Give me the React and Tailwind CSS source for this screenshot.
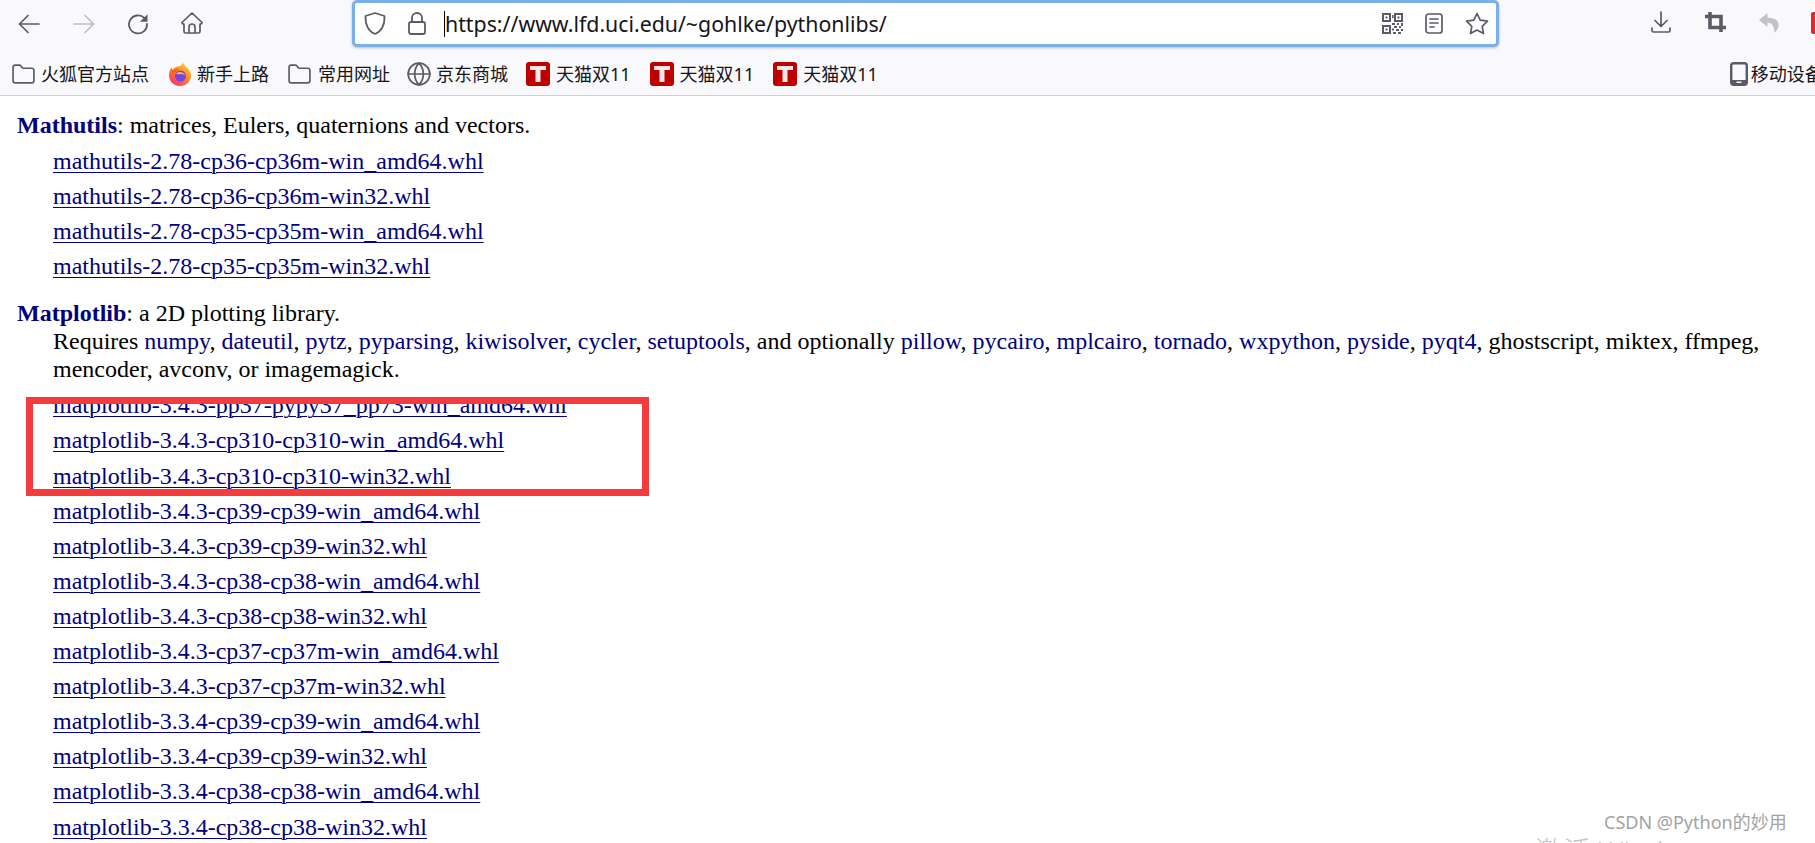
import { Folder, Globe } from 'lucide-react'

const ink = '#5b5b66'

const Back = ({ color = ink, flip = false }) => (
  <svg width="22" height="20" viewBox="0 0 22 20" fill="none" stroke={color} strokeWidth="1.7" strokeLinecap="round" strokeLinejoin="round" style={flip ? { transform: 'scaleX(-1)' } : undefined}>
    <path d="M1.5 10H21M10 1.5 1.5 10l8.5 8.5" />
  </svg>
)

const Reload = () => (
  <svg width="22" height="22" viewBox="0 0 22 22" fill="none">
    <path d="M17.5 5.2A9 9 0 1 0 20 11" stroke={ink} strokeWidth="1.8" strokeLinecap="round" />
    <path d="M20.5 1.2v7.6h-7.6z" fill={ink} />
  </svg>
)

const HomeIcon = () => (
  <svg width="22" height="22" viewBox="0 0 22 22" fill="none" stroke={ink} strokeWidth="1.7" strokeLinejoin="round">
    <path d="M11 1 1 10.5c0 1 .6 1.5 2 1.5v7.5c0 1 .6 1.5 1.5 1.5h13c1 0 1.500-.5 1.500-1.500V12c1.400 0 2-.5 2-1.500z" />
    <path d="M8 21v-6a3 3 0 0 1 6 0v6" />
  </svg>
)

const Shield = () => (
  <svg width="22" height="23" viewBox="0 0 22 23" fill="none" stroke={ink} strokeWidth="1.7" strokeLinejoin="round">
    <path d="M11 1 1.500 4c-.3 8 1.500 14.500 9.500 18 8-3.500 9.800-10 9.500-18z" />
  </svg>
)

const LockIcon = () => (
  <svg width="18" height="23" viewBox="0 0 18 23" fill="none" stroke={ink} strokeWidth="1.8">
    <rect x="1" y="10" width="16" height="12" rx="2" />
    <path d="M4 10V6a5 5 0 0 1 10 0v4" />
  </svg>
)

const QrIcon = () => (
  <svg width="21" height="21" viewBox="0 0 21 21" fill={ink}>
    <path fillRule="evenodd" d="M0 0h9v9H0zM2 2v5h5V2zM12 0h9v9h-9zM14 2v5h5V2zM0 12h9v9H0zM2 14v5h5v-5z" />
    <rect x="3.500" y="3.500" width="2" height="2" />
    <rect x="15.500" y="3.500" width="2" height="2" />
    <rect x="3.500" y="15.500" width="2" height="2" />
    <rect x="10" y="2" width="1.500" height="3" />
    <rect x="10" y="10" width="3" height="2" />
    <rect x="15" y="10" width="2" height="2" />
    <rect x="19" y="10" width="2" height="3" />
    <rect x="12" y="13" width="3" height="2" />
    <rect x="17" y="13" width="2" height="2" />
    <rect x="10" y="15.500" width="2" height="2" />
    <rect x="14" y="16" width="3" height="2" />
    <rect x="19" y="16" width="2" height="2" />
    <rect x="11" y="19" width="3" height="2" />
    <rect x="16" y="19" width="3" height="2" />
  </svg>
)

const Reader = () => (
  <svg width="18" height="21" viewBox="0 0 18 21" fill="none" stroke={ink} strokeWidth="1.700" strokeLinecap="round">
    <rect x="1" y="1" width="16" height="19" rx="2.500" />
    <path d="M5 6h8M5 10h8M5 14h4" />
  </svg>
)

const StarIcon = () => (
  <svg width="24" height="23" viewBox="0 0 24 23" fill="none" stroke={ink} strokeWidth="1.700" strokeLinejoin="round">
    <path d="m12 1.500 3.200 6.700 7.300 1-5.300 5.100 1.300 7.300-6.500-3.500-6.500 3.500 1.300-7.300L1.500 9.200l7.300-1z" />
  </svg>
)

const DownloadIcon = () => (
  <svg width="20" height="22" viewBox="0 0 20 22" fill="none" stroke={ink} strokeWidth="1.700" strokeLinecap="round" strokeLinejoin="round">
    <path d="M10 1v14M4 9.500l6 6 6-6M1 17v2.500c0 1 .6 1.500 1.500 1.500h15c1 0 1.500-.5 1.500-1.500V17" />
  </svg>
)

const CropIcon = () => (
  <svg width="21" height="20" viewBox="0 0 21 20" fill="none" stroke={ink} strokeWidth="3.600">
    <path d="M0 4.500h16V20M5 0v15.500h16" />
  </svg>
)

const UndoIcon = () => (
  <svg width="20" height="20" viewBox="0 0 20 20" fill="#c2c2c8">
    <path d="M8.500 0 0 7l8.500 7V9.800c4 0 6.500 2.500 7 10 3.500-3 4.500-6 4-9-.6-4-4.500-6-11-6z" />
  </svg>
)

const Firefox = () => (
  <svg width="22" height="24" viewBox="0 0 22 24">
    <defs>
      <linearGradient id="ff" x1="0.800" y1="0" x2="0.200" y2="1">
        <stop offset="0" stopColor="#ffd53a" />
        <stop offset="0.450" stopColor="#ff8a1e" />
        <stop offset="1" stopColor="#f5307a" />
      </linearGradient>
    </defs>
    <path d="M14 0c.5 3 2.500 4 4.500 6 2.200 2.300 3.500 5 3.500 7.500C22 19.500 17 24 11 24S0 19.500 0 13.500c0-3 .8-6 2.500-8 .3 1.200.8 2 1.500 2.500C5 5.500 7.500 4 10 4.500 12 3.500 13.500 2 14 0z" fill="url(#ff)" />
    <path d="M2.500 9c2-1.500 5-2.500 8-1.500-2 .5-3 1.500-3.500 2.500-2 0-3.500 1-3 3-.8-1-1.500-2.500-1.500-4z" fill="#ff5a1f" />
    <circle cx="11.500" cy="14" r="5.500" fill="#7542e5" />
    <path d="M7 11.500c1.500-1.500 4.500-2 6.500-1 1.500.8 2.500 2 2.500 3.500-1-1.500-3-2.200-4.500-1.800-1.500.3-3 .2-4.500-.7z" fill="#ffb52e" />
  </svg>
)

const TianMao = () => (
  <div className="flex h-6 w-6 items-center justify-center rounded-[3px] bg-[#bf0000]">
    <svg width="16" height="16" viewBox="0 0 16 16" fill="#f4e9e9">
      <path d="M0 0h16v4h-5.500v12h-5V4H0z" />
    </svg>
  </div>
)

const PhoneIcon = () => (
  <svg width="18" height="24" viewBox="0 0 18 24" fill="none">
    <rect x="1.200" y="1.200" width="15.600" height="21.600" rx="2.500" stroke={ink} strokeWidth="2.400" />
    <rect x="1" y="18" width="16" height="5" fill={ink} />
    <rect x="6.500" y="19.500" width="5" height="1.500" fill="#f9f9fb" />
  </svg>
)

const Mark = ({ className = '', children }) => (
  <span className={`shrink-0 whitespace-nowrap text-[18px] leading-6 text-[#15141a] ${className}`}>{children}</span>
)

const FolderIcon = ({ className }) => <Folder size={25} strokeWidth={1.6} color={ink} className={`shrink-0 ${className}`} />

const mathutils = [
  'mathutils-2.78-cp36-cp36m-win_amd64.whl',
  'mathutils-2.78-cp36-cp36m-win32.whl',
  'mathutils-2.78-cp35-cp35m-win_amd64.whl',
  'mathutils-2.78-cp35-cp35m-win32.whl',
]

const matplotlib = [
  'matplotlib-3.4.3-pp37-pypy37_pp73-win_amd64.whl',
  'matplotlib-3.4.3-cp310-cp310-win_amd64.whl',
  'matplotlib-3.4.3-cp310-cp310-win32.whl',
  'matplotlib-3.4.3-cp39-cp39-win_amd64.whl',
  'matplotlib-3.4.3-cp39-cp39-win32.whl',
  'matplotlib-3.4.3-cp38-cp38-win_amd64.whl',
  'matplotlib-3.4.3-cp38-cp38-win32.whl',
  'matplotlib-3.4.3-cp37-cp37m-win_amd64.whl',
  'matplotlib-3.4.3-cp37-cp37m-win32.whl',
  'matplotlib-3.3.4-cp39-cp39-win_amd64.whl',
  'matplotlib-3.3.4-cp39-cp39-win32.whl',
  'matplotlib-3.3.4-cp38-cp38-win_amd64.whl',
  'matplotlib-3.3.4-cp38-cp38-win32.whl',
]

const requires = ['numpy', 'dateutil', 'pytz', 'pyparsing', 'kiwisolver', 'cycler', 'setuptools']
const optional = ['pillow', 'pycairo', 'mplcairo', 'tornado', 'wxpython', 'pyside', 'pyqt4']

const LinkRow = ({ name }) => (
  <li className="h-[35.1px] leading-[35.1px]">
    <a className="text-[#000080] underline decoration-1 underline-offset-[3px]" href="#">{name}</a>
  </li>
)

const App = () => {
  return (
    <div className="relative h-[843px] w-[1815px] overflow-hidden bg-white font-['Liberation_Serif',serif] text-[24px] text-black">
      <header className="h-[96px] border-b border-[#cfcfd2] bg-[#f9f9fb] font-['Noto_Sans','Noto_Sans_CJK_SC',sans-serif]">
        <div className="flex h-[48px] items-start">
          <div className="ml-[18px] mt-[14px] shrink-0"><Back /></div>
          <div className="ml-[33px] mt-[14px] shrink-0"><Back color="#bdbdc4" flip /></div>
          <div className="ml-[32px] mt-[13px] shrink-0"><Reload /></div>
          <div className="ml-[32px] mt-[12px] shrink-0"><HomeIcon /></div>

          <div className="ml-[149px] flex h-[47px] w-[1147px] shrink-0 items-center rounded-[5px] border-[3px] border-[#7aaeec] bg-white shadow-[0_1px_3px_rgba(0,0,0,0.25)]">
            <div className="ml-[9px]"><Shield /></div>
            <div className="ml-[22px]"><LockIcon /></div>
            <div className="ml-[18px] h-[26px] w-px bg-black" />
            <span className="whitespace-nowrap text-[21.3px] leading-none text-[#15141a]">https://www.lfd.uci.edu/~gohlke/pythonlibs/</span>
            <div className="ml-auto"><QrIcon /></div>
            <div className="ml-[22px]"><Reader /></div>
            <div className="ml-[22px] mr-[7px]"><StarIcon /></div>
          </div>

          <div className="ml-[152px] mt-[11px] shrink-0"><DownloadIcon /></div>
          <div className="ml-[34px] mt-[12px] shrink-0"><CropIcon /></div>
          <div className="ml-[33px] mt-[13px] shrink-0"><UndoIcon /></div>
          <div className="ml-[32px] mt-[12px] h-[22px] w-[10px] shrink-0 rounded-l-[2px] bg-[#d92d2d]" />
        </div>

        <div className="flex h-[47px] items-center pt-[5px]">
          <FolderIcon className="ml-[11px]" />
          <Mark className="ml-[5px]">火狐官方站点</Mark>
          <div className="ml-[20px] shrink-0"><Firefox /></div>
          <Mark className="ml-[6px]">新手上路</Mark>
          <FolderIcon className="ml-[18px]" />
          <Mark className="ml-[6px]">常用网址</Mark>
          <Globe size={26} strokeWidth={1.6} color={ink} className="ml-[16px] shrink-0" />
          <Mark className="ml-[4px]">京东商城</Mark>
          <div className="ml-[18px] shrink-0"><TianMao /></div>
          <Mark className="ml-[6px]">天猫双11</Mark>
          <div className="ml-[19px] shrink-0"><TianMao /></div>
          <Mark className="ml-[6px]">天猫双11</Mark>
          <div className="ml-[19px] shrink-0"><TianMao /></div>
          <Mark className="ml-[6px]">天猫双11</Mark>
          <div className="ml-[852px] shrink-0"><PhoneIcon /></div>
          <Mark className="ml-[3px]">移动设备</Mark>
        </div>
      </header>

      <main className="pl-[17px] pt-[15px]">
        <p className="h-[28px] leading-[28px]">
          <strong className="text-[#000080]">Mathutils</strong>: matrices, Eulers, quaternions and vectors.
        </p>
        <ul className="ml-[36px] mt-[5px]">
          {mathutils.map((name) => <LinkRow key={name} name={name} />)}
        </ul>

        <p className="mt-[15px] h-[28px] leading-[28px]">
          <strong className="text-[#000080]">Matplotlib</strong>: a 2D plotting library.
        </p>
        <p className="ml-[36px] w-[1740px] leading-[28px]">
          Requires{' '}
          {requires.map((name) => (
            <span key={name}><a className="text-[#000080]" href="#">{name}</a>, </span>
          ))}
          and optionally{' '}
          {optional.map((name) => (
            <span key={name}><a className="text-[#000080]" href="#">{name}</a>, </span>
          ))}
          ghostscript, miktex, ffmpeg,<br />
          mencoder, avconv, or imagemagick.
        </p>
        <ul className="ml-[36px] mt-[5px]">
          {matplotlib.map((name) => <LinkRow key={name} name={name} />)}
        </ul>
      </main>

      {/* annotation and watermarks lying over the page */}
      <div className="absolute left-[26px] top-[397px] h-[99px] w-[623px] border-[7px] border-[#f53b3b]" />
      <div className="absolute left-[1604px] top-[809px] whitespace-nowrap font-['Noto_Sans','Noto_Sans_CJK_SC',sans-serif] text-[18px] leading-[26px] text-[#a3a3a3]">CSDN @Python的妙用</div>
      <div className="absolute left-[1535px] top-[832px] whitespace-nowrap font-['Noto_Sans','Noto_Sans_CJK_SC',sans-serif] text-[28px] font-light leading-[38px] text-[#c4c4c4]">激活 Windows</div>
    </div>
  )
}

export default App
